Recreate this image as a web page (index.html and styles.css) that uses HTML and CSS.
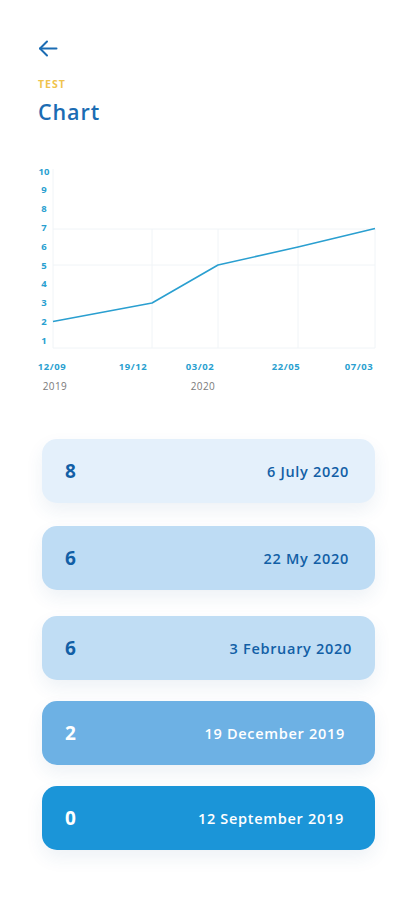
FILE: index.html
```html
<!DOCTYPE html>
<html lang="en">
<head>
<meta charset="utf-8">
<title>Chart</title>
<link rel="stylesheet" href="styles.css">
</head>
<body>
<div class="screen">
  <header class="header">
    <button class="back" aria-label="Back">
      <svg width="20" height="17" viewBox="0 0 20 17" fill="none" stroke="#1b6cb3" stroke-width="2" stroke-linecap="round" stroke-linejoin="round">
        <path d="M9 1.5 L2 8.5 L9 15.5"/>
        <path d="M2 8.5 H18.5"/>
      </svg>
    </button>
    <div class="eyebrow">TEST</div>
    <h1 class="title">Chart</h1>
  </header>

  <section class="chart">
    <svg class="chart-svg" width="415" height="240" viewBox="0 0 415 240">
      <g class="grid" stroke="#f0f4f7" stroke-width="1" fill="none">
        <line x1="53" y1="10" x2="53" y2="189"/>
        <line x1="152" y1="70" x2="152" y2="189"/>
        <line x1="218" y1="70" x2="218" y2="189"/>
        <line x1="298" y1="70" x2="298" y2="189"/>
        <line x1="375" y1="70" x2="375" y2="189"/>
        <line x1="53" y1="70" x2="375" y2="70"/>
        <line x1="53" y1="106" x2="375" y2="106"/>
        <line x1="53" y1="189" x2="375" y2="189"/>
      </g>
      <g class="ylabels" text-anchor="middle">
        <text x="44" y="15.5">10</text>
        <text x="44" y="34.3">9</text>
        <text x="44" y="53.1">8</text>
        <text x="44" y="71.9">7</text>
        <text x="44" y="90.7">6</text>
        <text x="44" y="109.5">5</text>
        <text x="44" y="128.3">4</text>
        <text x="44" y="147.1">3</text>
        <text x="44" y="165.9">2</text>
        <text x="44" y="184.7">1</text>
      </g>
      <polyline points="53,162.5 152,144 218,106 298,88 375,69.5" fill="none" stroke="#2a9fd0" stroke-width="1.6" stroke-linejoin="round"/>
      <g class="xlabels" text-anchor="middle">
        <text x="52" y="211">12/09</text>
        <text x="133" y="211">19/12</text>
        <text x="200" y="211">03/02</text>
        <text x="286" y="211">22/05</text>
        <text x="359" y="211">07/03</text>
      </g>
      <g class="years" text-anchor="middle">
        <text x="55" y="231">2019</text>
        <text x="203" y="231">2020</text>
      </g>
    </svg>
  </section>

  <section class="list">
    <div class="card card-1"><span class="num">8</span><span class="date">6 July 2020</span></div>
    <div class="card card-2"><span class="num">6</span><span class="date">22 My 2020</span></div>
    <div class="card card-3"><span class="num">6</span><span class="date">3 February 2020</span></div>
    <div class="card card-4"><span class="num">2</span><span class="date">19 December 2019</span></div>
    <div class="card card-5"><span class="num">0</span><span class="date">12 September 2019</span></div>
  </section>
</div>
</body>
</html>
```

FILE: styles.css
```css
* { box-sizing: border-box; }

html, body {
  margin: 0;
  padding: 0;
  background: #ffffff;
}

body {
  font-family: "Open Sans", "DejaVu Sans", sans-serif;
  color: #1b6cb3;
}

.screen {
  width: 415px;
  min-height: 900px;
  background: #fff;
}

.header {
  padding: 40px 0 0 38px;
  display: flex;
  flex-direction: column;
  align-items: flex-start;
}

.back {
  border: 0;
  background: none;
  padding: 0;
  margin: 0;
  width: 20px;
  height: 17px;
  display: block;
}

.eyebrow {
  margin-top: 21px;
  font-size: 10.5px;
  font-weight: 700;
  letter-spacing: 1px;
  color: #f0c34c;
  line-height: 12px;
}

.title {
  margin: 9px 0 0 0;
  font-size: 21.5px;
  line-height: 26px;
  font-weight: 600;
  color: #1b6cb3;
  letter-spacing: 0.9px;
}

.chart {
  margin-top: 34px;
  height: 240px;
}

.chart-svg {
  display: block;
}

.ylabels text {
  font-family: "Open Sans", sans-serif;
  font-size: 9.5px;
  font-weight: 700;
  fill: #2a9fd0;
}

.xlabels text {
  font-family: "Open Sans", sans-serif;
  font-size: 9.5px;
  font-weight: 700;
  letter-spacing: 0.6px;
  fill: #2a9fd0;
}

.years text {
  font-family: "Open Sans", sans-serif;
  font-size: 10px;
  font-weight: 400;
  letter-spacing: 0.4px;
  fill: #7a7a7a;
}

.list {
  margin-top: 40px;
  padding: 0 40px 0 42px;
  display: flex;
  flex-direction: column;
  gap: 21px;
}

.card {
  height: 64px;
  border-radius: 15px;
  display: flex;
  align-items: center;
  justify-content: space-between;
  padding: 0 26px 0 23px;
  box-shadow: 0 8px 18px rgba(40, 90, 140, 0.08);
  color: #125fa6;
}

.num {
  font-size: 19px;
  font-weight: 700;
}

.date {
  font-size: 14.5px;
  font-weight: 600;
  letter-spacing: 0.7px;
}

.card-1 { background: #e4f0fb; }
.card-2 { background: #bedcf4; margin-top: 2px; }
.card-3 { background: #c0ddf4; padding-right: 23px; margin-top: 5px; }
.card-4 { background: #6db1e4; color: #ffffff; padding-right: 30px; }
.card-5 { background: #1b95d8; color: #ffffff; padding-right: 31px; }
```
